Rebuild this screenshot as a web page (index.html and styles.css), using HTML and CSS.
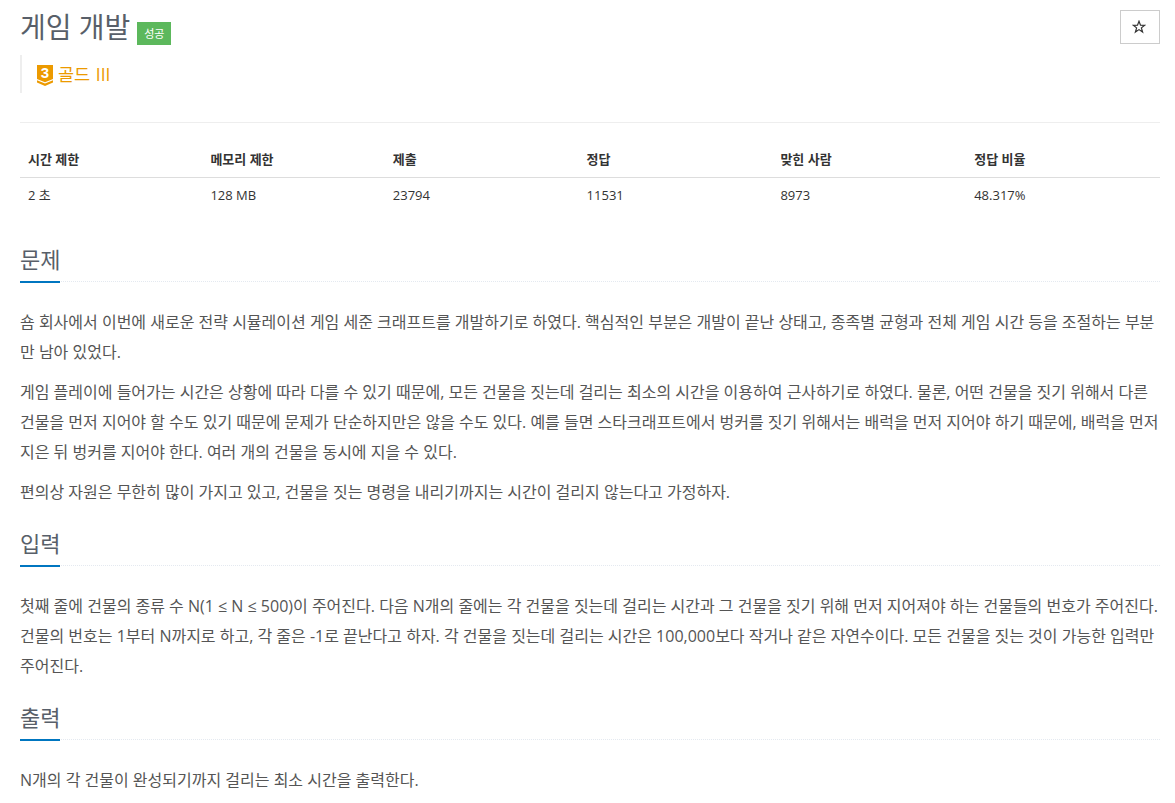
FILE: index.html
```
<!DOCTYPE html>
<html lang="ko">
<head>
    <meta charset="UTF-8" />
    <meta name="viewport" content="width=device-width, initial-scale=1" />
    <title>게임 개발</title>
    <link rel="stylesheet" href="styles.css">
</head>
<body>
    <div class="page-header">
        <div class="title-row">
            <h1>게임 개발</h1>
            <span class="label-success">성공</span>
            <button type="button" class="btn-star" aria-label="즐겨찾기">
                <svg width="14" height="14" viewBox="0 0 14 14">
                    <path d="M7 1.2 L8.5 5.2 L12.7 5.3 L9.4 7.9 L10.6 12 L7 9.6 L3.4 12 L4.6 7.9 L1.3 5.3 L5.5 5.2 Z" fill="none" stroke="#333" stroke-width="1.2" />
                </svg>
            </button>
        </div>
        <blockquote class="tier">
            <svg class="tier-icon" width="16" height="21" viewBox="0 0 16 21">
                <path d="M0 0 H16 V14 L8 17.3 L0 14 Z" fill="#ec9a00" />
                <path d="M0 15.3 L8 18.6 L16 15.3 V17.5 L8 21 L0 17.5 Z" fill="#ec9a00" />
                <text x="8" y="13" text-anchor="middle" class="tier-number">3</text>
            </svg>
            <span>골드 III</span>
        </blockquote>
    </div>

    <table id="problem-info">
        <thead>
            <tr>
                <th class="col-limit">시간 제한</th>
                <th class="col-limit">메모리 제한</th>
                <th>제출</th>
                <th>정답</th>
                <th>맞힌 사람</th>
                <th>정답 비율</th>
            </tr>
        </thead>
        <tbody>
            <tr>
                <td>2 초</td>
                <td>128 MB</td>
                <td>23794</td>
                <td>11531</td>
                <td>8973</td>
                <td>48.317%</td>
            </tr>
        </tbody>
    </table>

    <section>
        <div class="headline"><h2>문제</h2></div>
        <div class="problem-text">
            <p>숌 회사에서 이번에 새로운 전략 시뮬레이션 게임 세준 크래프트를 개발하기로 하였다. 핵심적인 부분은 개발이 끝난 상태고, 종족별 균형과 전체 게임 시간 등을 조절하는 부분<br>만 남아 있었다.</p>
            <p>게임 플레이에 들어가는 시간은 상황에 따라 다를 수 있기 때문에, 모든 건물을 짓는데 걸리는 최소의 시간을 이용하여 근사하기로 하였다. 물론, 어떤 건물을 짓기 위해서 다른<br>건물을 먼저 지어야 할 수도 있기 때문에 문제가 단순하지만은 않을 수도 있다. 예를 들면 스타크래프트에서 벙커를 짓기 위해서는 배럭을 먼저 지어야 하기 때문에, 배럭을 먼저<br>지은 뒤 벙커를 지어야 한다. 여러 개의 건물을 동시에 지을 수 있다.</p>
            <p>편의상 자원은 무한히 많이 가지고 있고, 건물을 짓는 명령을 내리기까지는 시간이 걸리지 않는다고 가정하자.</p>
        </div>
    </section>

    <section>
        <div class="headline"><h2>입력</h2></div>
        <div class="problem-text">
            <p>첫째 줄에 건물의 종류 수 N(1 ≤ N ≤ 500)이 주어진다. 다음 N개의 줄에는 각 건물을 짓는데 걸리는 시간과 그 건물을 짓기 위해 먼저 지어져야 하는 건물들의 번호가 주어진다.<br>건물의 번호는 1부터 N까지로 하고, 각 줄은 -1로 끝난다고 하자. 각 건물을 짓는데 걸리는 시간은 100,000보다 작거나 같은 자연수이다. 모든 건물을 짓는 것이 가능한 입력만<br>주어진다.</p>
        </div>
    </section>

    <section>
        <div class="headline"><h2>출력</h2></div>
        <div class="problem-text">
            <p>N개의 각 건물이 완성되기까지 걸리는 최소 시간을 출력한다.</p>
        </div>
    </section>
</body>
</html>
```
FILE: styles.css
```
* {
    box-sizing: border-box;
}

body {
    margin: 0;
    padding: 10px 15px 0 20px;
    height: 803px;
    overflow: hidden;
    background: #fff;
    color: #333;
    font-family: "Open Sans", "Noto Sans CJK KR", sans-serif;
    font-size: 13px;
}

h1, h2 {
    margin: 0;
    font-weight: 400;
    color: #585f69;
}

.page-header {
    height: 113px;
    border-bottom: 1px solid #eee;
}

.title-row {
    display: flex;
    height: 35px;
}

h1 {
    font-size: 28px;
    line-height: 35px;
}

.label-success {
    width: 34px;
    height: 23px;
    margin: 12px 0 0 7px;
    background: #5cb85c;
    color: #fff;
    font-size: 11px;
    line-height: 23px;
    text-align: center;
}

.btn-star {
    display: flex;
    align-items: center;
    justify-content: center;
    width: 40px;
    height: 34px;
    margin-left: auto;
    padding: 0 2px 1px 0;
    border: 1px solid #ccc;
    background: #fff;
}

.tier {
    display: flex;
    height: 38px;
    margin: 10px 0 0;
    padding-left: 15px;
    border-left: 2px solid #eee;
    color: #ec9a00;
    font-size: 17.5px;
    line-height: 38px;
    word-spacing: 1px;
}

.tier-icon {
    margin: 10px 5px 0 0;
}

.tier-number {
    fill: #fff;
    font-family: "Liberation Sans", sans-serif;
    font-size: 15px;
    font-weight: 700;
}

#problem-info {
    width: 100%;
    margin-top: 18px;
    border-collapse: collapse;
    table-layout: fixed;
}

#problem-info th,
#problem-info td {
    height: 36px;
    padding: 0 8px;
    line-height: 18px;
    text-align: left;
}

#problem-info th {
    border-bottom: 1px solid #ddd;
    font-weight: 700;
}

#problem-info .col-limit {
    width: 16%;
}

.headline {
    display: flex;
    height: 38px;
    border-bottom: 1px dotted #e4e9f0;
}

h2 {
    height: 39px;
    border-bottom: 2px solid #0076c0;
    font-size: 22px;
    line-height: 31px;
}

section {
    margin-top: 21px;
}

#problem-info + section {
    margin-top: 31px;
}

.problem-text {
    padding-top: 25px;
    color: #555;
    font-size: 16px;
    line-height: 30px;
    white-space: nowrap;
}

.problem-text p {
    margin: 0 0 10px;
}
```
